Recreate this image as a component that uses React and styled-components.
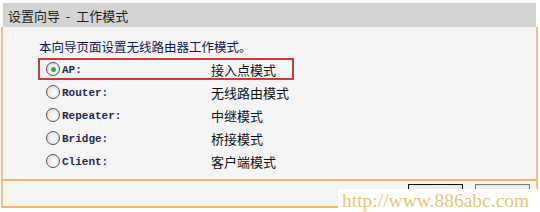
import React from "react";
import styled, { createGlobalStyle } from "styled-components";

const Global = createGlobalStyle`
  html, body {
    margin: 0;
    padding: 0;
    background: #ffffff;
  }
`;

const Page = styled.div`
  width: 540px;
  height: 212px;
  position: relative;
  overflow: hidden;
  padding-top: 3px;
  box-sizing: border-box;
  font-family: "Noto Sans CJK SC", "Noto Sans", sans-serif;
`;

const Header = styled.div`
  height: 24px;
  margin: 0 4px 0 3px;
  background: #d4d4d4;
  display: flex;
  align-items: center;
  padding-left: 5px;
  font-size: 13px;
  color: #1e1e1e;
  white-space: pre;
`;

const Panel = styled.div`
  margin: 0 2px 0 1px;
  border-left: 2px solid #f3c27e;
  border-right: 2px solid #f3c27e;
  background: #f5f5f5;
`;

const Body = styled.div`
  height: 154px;
  padding: 11px 0 0 35px;
  box-sizing: border-box;
  border-bottom: 2px solid #f1b869;
`;

const Intro = styled.div`
  font-size: 12.5px;
  line-height: 17px;
  color: #14145a;
  padding-left: 1px;
  margin-bottom: 3px;
`;

const Options = styled.div`
  display: flex;
  flex-direction: column;
  gap: 1px;
`;

const Row = styled.label`
  width: 256px;
  height: 22px;
  box-sizing: border-box;
  border: 2px solid ${(p) => (p.$marked ? "#cc3a3f" : "transparent")};
  display: flex;
  align-items: center;
  padding-left: 6px;
`;

const Radio = styled.span`
  width: 14px;
  height: 14px;
  box-sizing: border-box;
  border-radius: 50%;
  border: 1px solid #50545e;
  background: radial-gradient(circle at 60% 60%, #ffffff 0%, #e4e4e4 65%, #c4c4c4 100%);
  display: flex;
  align-items: center;
  justify-content: center;
  flex: none;

  &::after {
    content: "";
    width: 5px;
    height: 5px;
    border-radius: 50%;
    background: ${(p) => (p.$on ? "#2fae3a" : "transparent")};
  }
`;

const Name = styled.span`
  width: 149px;
  padding-left: 2px;
  font-family: "Liberation Mono", "DejaVu Sans Mono", monospace;
  font-weight: bold;
  font-size: 11px;
  color: #22285a;
  padding-top: 2px;
`;

const Mode = styled.span`
  font-size: 13px;
  color: #121212;
`;

const Footer = styled.div`
  height: 27px;
  border-bottom: 2px solid #f1b869;
  display: flex;
  justify-content: flex-end;
  align-items: flex-start;
  gap: 12px;
  padding: 3px 6px 0 0;
  box-sizing: border-box;
`;

const Button = styled.button`
  width: 55px;
  height: 22px;
  background: #ececec;
  border: 1px solid ${(p) => (p.$primary ? "#111111" : "#7a7a7a")};
  padding: 0;
`;

const Watermark = styled.div`
  position: absolute;
  left: 338px;
  top: 189px;
  width: 202px;
  height: 23px;
  background: #ffffff;
  font-family: "Liberation Serif", serif;
  font-size: 19.5px;
  line-height: 23px;
  color: #e6c77d;
  padding-left: 4px;
  box-sizing: border-box;
  white-space: nowrap;
`;

const modes = [
  { name: "AP:", label: "接入点模式", on: true },
  { name: "Router:", label: "无线路由模式" },
  { name: "Repeater:", label: "中继模式" },
  { name: "Bridge:", label: "桥接模式" },
  { name: "Client:", label: "客户端模式" },
];

export default function App() {
  return (
    <>
      <Global />
      <Page>
        <Header>{"设置向导  -  工作模式"}</Header>
        <Panel>
          <Body>
            <Intro>本向导页面设置无线路由器工作模式。</Intro>
            <Options>
              {modes.map((m) => (
                <Row key={m.name} $marked={m.on}>
                  <Radio $on={m.on} />
                  <Name>{m.name}</Name>
                  <Mode>{m.label}</Mode>
                </Row>
              ))}
            </Options>
          </Body>
          <Footer>
            <Button $primary aria-label="上一步" />
            <Button aria-label="下一步" />
          </Footer>
        </Panel>
        <Watermark>http://www.886abc.com</Watermark>
      </Page>
    </>
  );
}
